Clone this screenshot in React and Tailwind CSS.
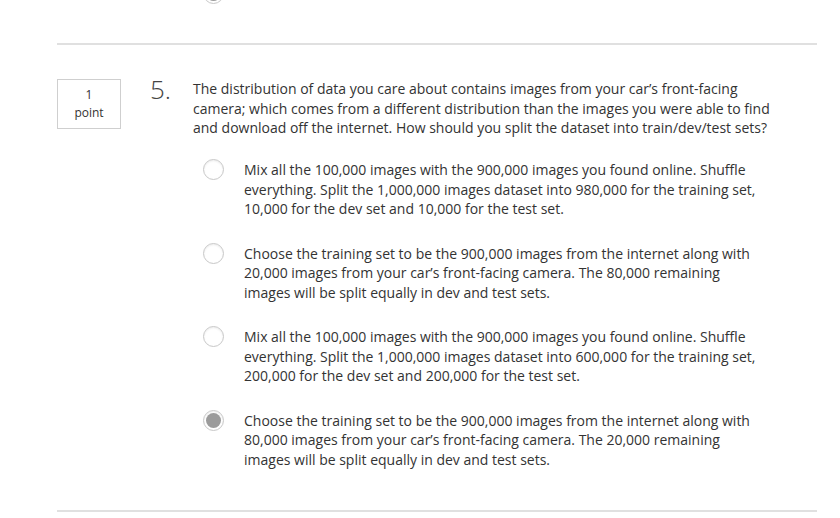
const OPTIONS = [
  {
    id: 'a',
    text: 'Mix all the 100,000 images with the 900,000 images you found online. Shuffle everything. Split the 1,000,000 images dataset into 980,000 for the training set, 10,000 for the dev set and 10,000 for the test set.',
  },
  {
    id: 'b',
    text: 'Choose the training set to be the 900,000 images from the internet along with 20,000 images from your car’s front-facing camera. The 80,000 remaining images will be split equally in dev and test sets.',
  },
  {
    id: 'c',
    text: 'Mix all the 100,000 images with the 900,000 images you found online. Shuffle everything. Split the 1,000,000 images dataset into 600,000 for the training set, 200,000 for the dev set and 200,000 for the test set.',
  },
  {
    id: 'd',
    text: 'Choose the training set to be the 900,000 images from the internet along with 80,000 images from your car’s front-facing camera. The 20,000 remaining images will be split equally in dev and test sets.',
  },
];

function Radio({ checked }) {
  return (
    <span className="flex h-[21px] w-[21px] shrink-0 items-center justify-center rounded-full border border-[#c8c8c8] bg-white shadow-[inset_0_1px_2px_rgba(0,0,0,0.08)]">
      {checked && <span className="h-[15px] w-[15px] rounded-full bg-[#9b9b9b]" />}
    </span>
  );
}

export default function App() {
  const selected = 'd';

  return (
    <div
      className="h-[518px] w-[840px] overflow-hidden bg-white text-[#333]"
      style={{ fontFamily: '"Open Sans", "Liberation Sans", sans-serif' }}
    >
      <div className="pl-[57px] w-[817px]">
        {/* tail of previous question */}
        <div className="flex h-[43px] flex-col">
          <div className="-mt-[17px] ml-[146px]">
            <Radio checked />
          </div>
        </div>
        <div className="h-[2px] bg-[#e0e0e0]" />

        <div className="mt-[34px] flex">
          <div className="flex h-[50px] w-[64px] shrink-0 flex-col items-center justify-center border border-[#cfcfcf] text-[12px] leading-[18px]">
            <span>1</span>
            <span>point</span>
          </div>
          <div className="ml-[29px] w-[43px] shrink-0 -mt-[7px] text-[26px] font-light leading-[34px] text-[#444]">5.</div>
          <div className="flex-1">
            <p className="w-[590px] text-[14px] leading-[19.5px]">
              The distribution of data you care about contains images from your car’s front-facing camera; which comes from a different distribution than the images you were able to find and download off the internet. How should you split the dataset into train/dev/test sets?
            </p>
            <div className="mt-[22.5px] flex flex-col gap-[25px] pl-[10px]">
              {OPTIONS.map((o) => (
                <label key={o.id} className="flex items-start gap-[20px]">
                  <span className="-mt-[1px]">
                    <Radio checked={o.id === selected} />
                  </span>
                  <span className="w-[525px] text-[14px] leading-[19.5px]">{o.text}</span>
                </label>
              ))}
            </div>
          </div>
        </div>

        <div className="mt-[41px] h-[2px] bg-[#e0e0e0]" />
      </div>
    </div>
  );
}
